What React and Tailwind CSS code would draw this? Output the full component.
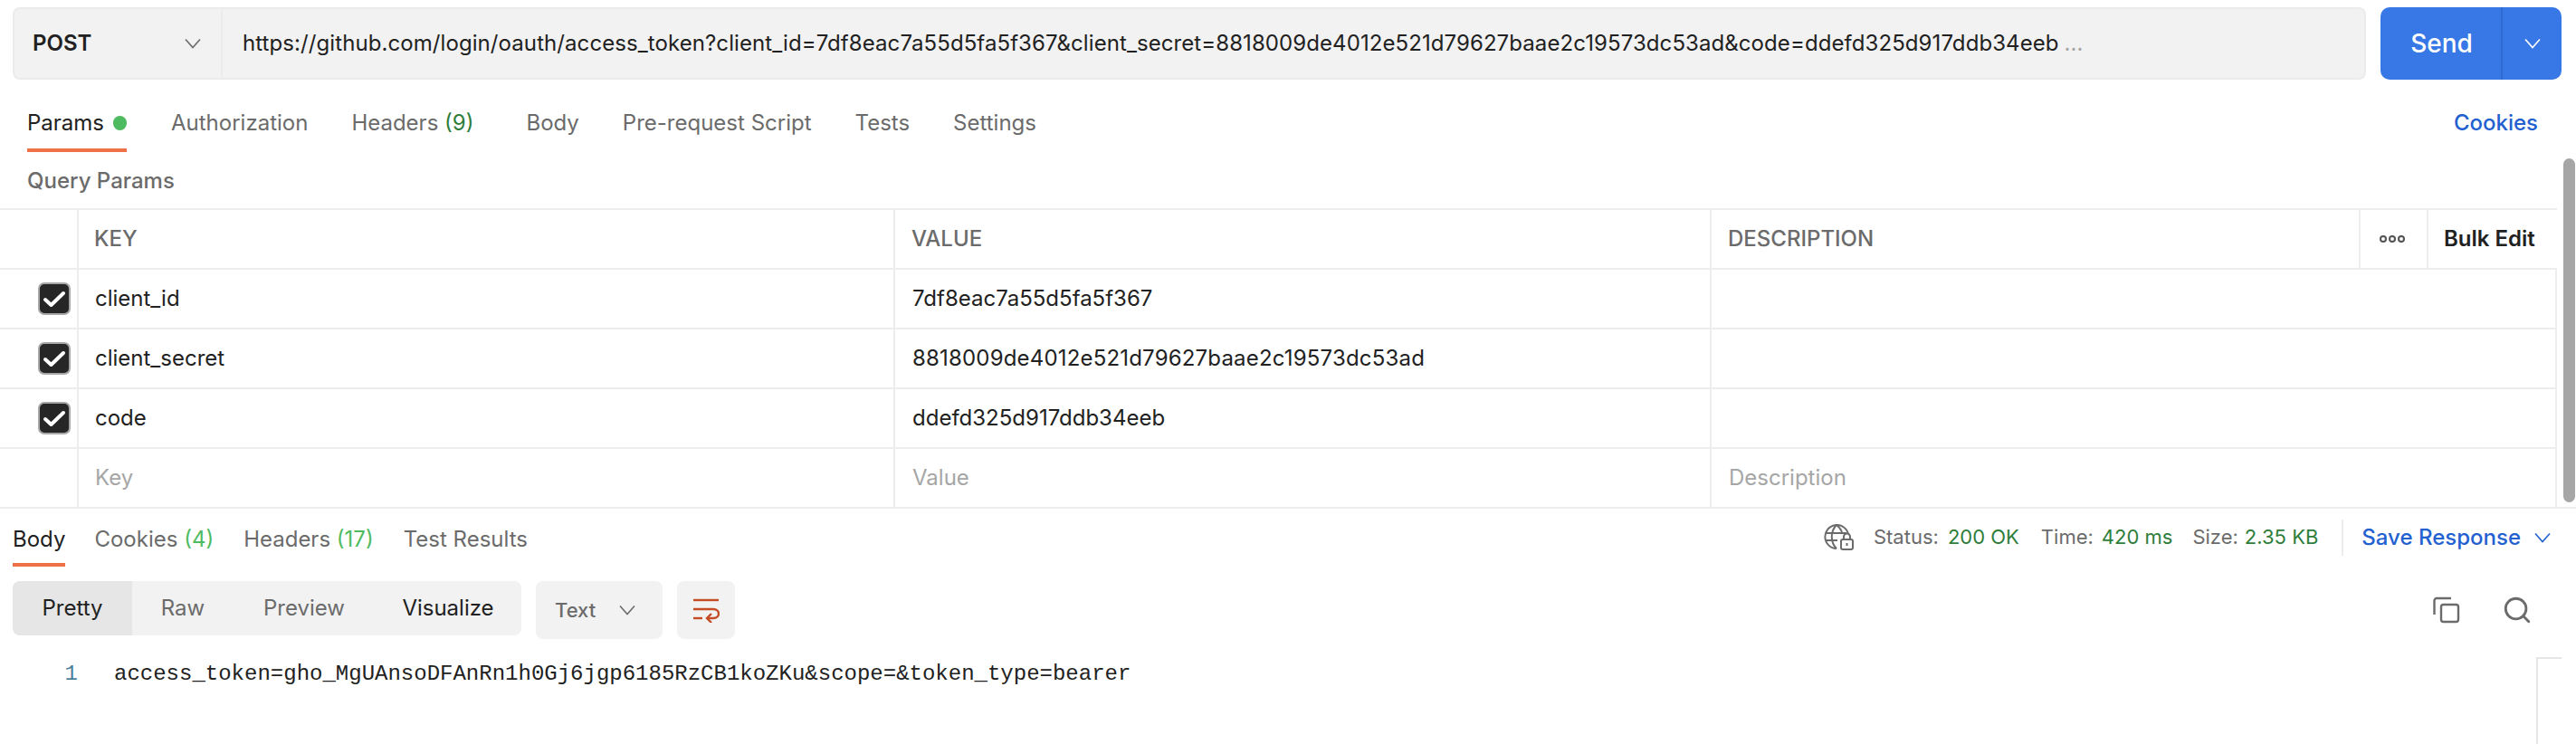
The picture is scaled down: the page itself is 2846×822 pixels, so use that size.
import { Search } from 'lucide-react';

const fieldRows = [
  { key: 'client_id', value: '7df8eac7a55d5fa5f367' },
  { key: 'client_secret', value: '8818009de4012e521d79627baae2c19573dc53ad', wide: true },
  { key: 'code', value: 'ddefd325d917ddb34eeb' },
];

const codeLine = 'access_token=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&scope=&token_type=bearer';

function Chevron({ className }) {
  return (
    <svg width="18" height="12" viewBox="0 0 18 12" fill="none" stroke="currentColor" strokeWidth="1.6" className={className}>
      <path d="M1 1.500 L9 10.500 L17 1.500" />
    </svg>
  );
}

function Check() {
  return (
    <div className="w-[36px] h-[36px] rounded-[7px] bg-[#262626] border-2 border-[#a6a6a6] flex items-center justify-center">
      <svg width="26" height="22" viewBox="0 0 26 22" fill="none">
        <path d="M3 12 L9.500 18 L23 5" stroke="#ffffff" strokeWidth="4" strokeLinecap="round" strokeLinejoin="round" />
      </svg>
    </div>
  );
}

function WrapIcon() {
  return (
    <svg width="30" height="28" viewBox="0 0 30 28" fill="none" stroke="#c44d26" strokeWidth="2.400">
      <path d="M1 3 H29" />
      <path d="M1 13 H23 C31 13 31 23 23 23 H16" />
      <path d="M21 18 L16 23 L21 28" />
      <path d="M1 23 H11" />
    </svg>
  );
}

function GlobeLock() {
  return (
    <svg width="33" height="29" viewBox="0 0 33 29" fill="none" stroke="#6b6b6b" strokeWidth="2">
      <path d="M14 27 A13 13 0 1 1 27 11" />
      <path d="M14 1 C7 8 7 20 14 27 M14 1 C18 4 20 8 20.500 11" />
      <path d="M2 10 H25 M2 18 H15" />
      <rect x="19" y="17" width="13" height="11" rx="2" fill="#ffffff" />
      <path d="M22 17 V14 A3.500 3.500 0 0 1 29 14 V17" />
      <path d="M25.500 21 V24" />
    </svg>
  );
}

function CopyIcon() {
  return (
    <svg width="30" height="30" viewBox="0 0 30 30" fill="none" stroke="#6b6b6b" strokeWidth="2.400">
      <path d="M20 2 H4 A2.500 2.500 0 0 0 1.500 4.500 V20" />
      <rect x="9" y="9" width="19" height="19" rx="2.500" />
    </svg>
  );
}

function TableRow({ first, second, third, placeholder, check, wide }) {
  const textColor = placeholder ? 'text-[#a6a6a6]' : 'text-[#212121]';
  return (
    <div className={`flex h-[66px] border-b-2 border-[#ededed] text-[24px] ${textColor}`}>
      <div className="w-[87px] shrink-0 border-r-2 border-[#ededed] flex items-center justify-end pr-[7px]">
        {check && <Check />}
      </div>
      <div className="w-[902px] shrink-0 border-r-2 border-[#ededed] flex items-center pl-[18px]">{first}</div>
      <div className={`w-[902px] shrink-0 border-r-2 border-[#ededed] flex items-center pl-[19px] ${wide ? 'tracking-[0.18px]' : ''}`}>{second}</div>
      <div className="flex-1 border-r-2 border-[#ededed] flex items-center pl-[19px]">{third}</div>
    </div>
  );
}

export default function App() {
  return (
    <div className="relative w-[2846px] h-[822px] bg-white overflow-hidden font-['Inter',sans-serif]">
      {/* request bar */}
      <div className="flex h-[80px] mt-[8px] ml-[14px] mr-[16px] gap-[16px]">
        <div className="flex flex-1 bg-[#f2f2f2] border-2 border-[#ebebeb] rounded-[8px]">
          <div className="w-[230px] shrink-0 border-r-2 border-[#ebebeb] flex items-center justify-between pl-[20px] pr-[22px]">
            <span className="text-[24px] font-semibold text-[#212121]">POST</span>
            <Chevron className="text-[#6b6b6b]" />
          </div>
          <div className="flex-1 flex items-center pl-[22px] text-[24px] tracking-[0.08px] text-[#212121] whitespace-nowrap">
            https://github.com/login/oauth/access_token?client_id=7df8eac7a55d5fa5f367&amp;client_secret=8818009de4012e521d79627baae2c19573dc53ad&amp;code=ddefd325d917ddb34eeb
            <span className="text-[#a6a6a6] ml-[6px]">...</span>
          </div>
        </div>
        <div className="flex w-[200px] shrink-0 bg-[#3778e6] rounded-[10px] text-white">
          <div className="w-[135px] flex items-center justify-center text-[28px] font-medium border-r-2 border-[#2f6bd1] pl-[2px]">Send</div>
          <div className="flex-1 flex items-center justify-center">
            <Chevron />
          </div>
        </div>
      </div>

      {/* request tabs */}
      <div className="flex items-start h-[56px] mt-[24px] ml-[30px] mr-[42px] text-[24px] text-[#6b6b6b] justify-between">
        <div className="flex">
          <div className="h-[56px] w-[110px] border-b-4 border-[#ef7147] flex pt-[6px] text-[#212121] gap-[10px] mr-[49px]">
            <span>Params</span>
            <span className="w-[16px] h-[16px] bg-[#4fbb60] rounded-full mt-[10px]" />
          </div>
          <div className="pt-[6px] mr-[48px]">Authorization</div>
          <div className="pt-[6px] mr-[58px]">Headers <span className="text-[#2f7d3b]">(9)</span></div>
          <div className="pt-[6px] mr-[48px]">Body</div>
          <div className="pt-[6px] mr-[48px]">Pre-request Script</div>
          <div className="pt-[6px] mr-[48px]">Tests</div>
          <div className="pt-[6px]">Settings</div>
        </div>
        <div className="pt-[6px] text-[#2360d0] font-medium">Cookies</div>
      </div>

      <div className="ml-[30px] mt-[12px] h-[40px] text-[24px] font-medium text-[#6b6b6b] flex items-center">Query Params</div>

      {/* params table */}
      <div className="mt-[10px] mr-[21px] border-t-2 border-[#ededed]">
        <div className="flex h-[66px] border-b-2 border-[#ededed] text-[24px] font-medium text-[#6b6b6b]">
          <div className="w-[87px] shrink-0 border-r-2 border-[#ededed]" />
          <div className="w-[902px] shrink-0 border-r-2 border-[#ededed] flex items-center pl-[17px]">KEY</div>
          <div className="w-[902px] shrink-0 border-r-2 border-[#ededed] flex items-center pl-[18px]">VALUE</div>
          <div className="w-[717px] shrink-0 border-r-2 border-[#ededed] flex items-center pl-[18px]">DESCRIPTION</div>
          <div className="w-[75px] shrink-0 border-r-2 border-[#ededed] flex items-center justify-center gap-[2px] pr-[3px]">
            <span className="w-[8px] h-[8px] rounded-full border-2 border-[#525252]" />
            <span className="w-[8px] h-[8px] rounded-full border-2 border-[#525252]" />
            <span className="w-[8px] h-[8px] rounded-full border-2 border-[#525252]" />
          </div>
          <div className="flex-1 flex items-center text-[#212121] font-semibold whitespace-nowrap pl-[17px]">Bulk Edit</div>
        </div>
        {fieldRows.map((row) => (
          <TableRow key={row.key} first={row.key} second={row.value} wide={row.wide} check />
        ))}
        <TableRow first="Key" second="Value" third="Description" placeholder />
      </div>

      {/* response header */}
      <div className="border-t-2 border-[#ededed] -mt-[2px] pl-[14px] pr-[28px] flex items-start justify-between text-[24px] text-[#6b6b6b]">
        <div className="flex h-[64px]">
          <div className="h-[64px] border-b-4 border-[#ef7147] pt-[16px] text-[#212121] mr-[32px]">Body</div>
          <div className="pt-[16px] mr-[33px]">Cookies <span className="text-[#4fbb60]">(4)</span></div>
          <div className="pt-[16px] mr-[33px]">Headers <span className="text-[#4fbb60]">(17)</span></div>
          <div className="pt-[16px]">Test Results</div>
        </div>
        <div className="flex items-center h-[52px] pt-[11px]">
          <GlobeLock />
          <span className="ml-[22px] text-[22px]">Status:</span>
          <span className="ml-[10px] text-[22px] text-[#2f7d3b]">200 OK</span>
          <span className="ml-[24px] text-[22px]">Time:</span>
          <span className="ml-[9px] text-[22px] text-[#2f7d3b]">420 ms</span>
          <span className="ml-[22px] text-[22px]">Size:</span>
          <span className="ml-[7px] text-[22px] text-[#2f7d3b]">2.35 KB</span>
          <span className="ml-[26px] w-[2px] h-[40px] bg-[#ededed]" />
          <span className="ml-[20px] text-[#2360d0] font-medium">Save Response</span>
          <Chevron className="ml-[15px] text-[#2360d0]" />
        </div>
      </div>

      {/* response toolbar */}
      <div className="flex items-start mt-[16px] pl-[14px] pr-[48px] h-[64px] text-[24px]">
        <div className="flex w-[562px] h-[60px] bg-[#f2f2f2] rounded-[8px] overflow-hidden">
          <div className="w-[132px] flex items-center justify-center bg-[#e6e6e6] text-[#212121]">Pretty</div>
          <div className="w-[112px] flex items-center justify-center text-[#6b6b6b]">Raw</div>
          <div className="w-[156px] flex items-center justify-center text-[#6b6b6b]">Preview</div>
          <div className="flex-1 flex items-center justify-center text-[#212121]">Visualize</div>
        </div>
        <div className="flex items-center w-[140px] h-[64px] ml-[16px] bg-[#f2f2f2] rounded-[8px] pl-[21px] text-[22px] text-[#6b6b6b] font-medium">
          Text
          <Chevron className="ml-[26px]" />
        </div>
        <div className="flex items-center justify-center w-[64px] h-[64px] ml-[16px] bg-[#f2f2f2] rounded-[8px]">
          <WrapIcon />
        </div>
        <div className="ml-auto flex items-center h-[64px] gap-[46px] text-[#6b6b6b]">
          <CopyIcon />
          <Search size={34} strokeWidth={2} />
        </div>
      </div>

      {/* response body */}
      <div className="flex mt-[19px] h-[40px] items-center font-['Liberation_Mono',monospace] text-[24px] text-[#212121] whitespace-pre">
        <span className="w-[86px] text-right text-[#4a7f9c]">1</span>
        <span className="ml-[40px]">{codeLine}</span>
      </div>

      {/* scrollbars */}
      <div className="absolute left-[2832px] top-[175px] w-[13px] h-[380px] rounded-full bg-[#a6a6a6]" />
      <div className="absolute left-[2802px] top-[726px] w-[28px] h-[96px] border-l-2 border-t-2 border-[#e6e6e6]" />
    </div>
  );
}
